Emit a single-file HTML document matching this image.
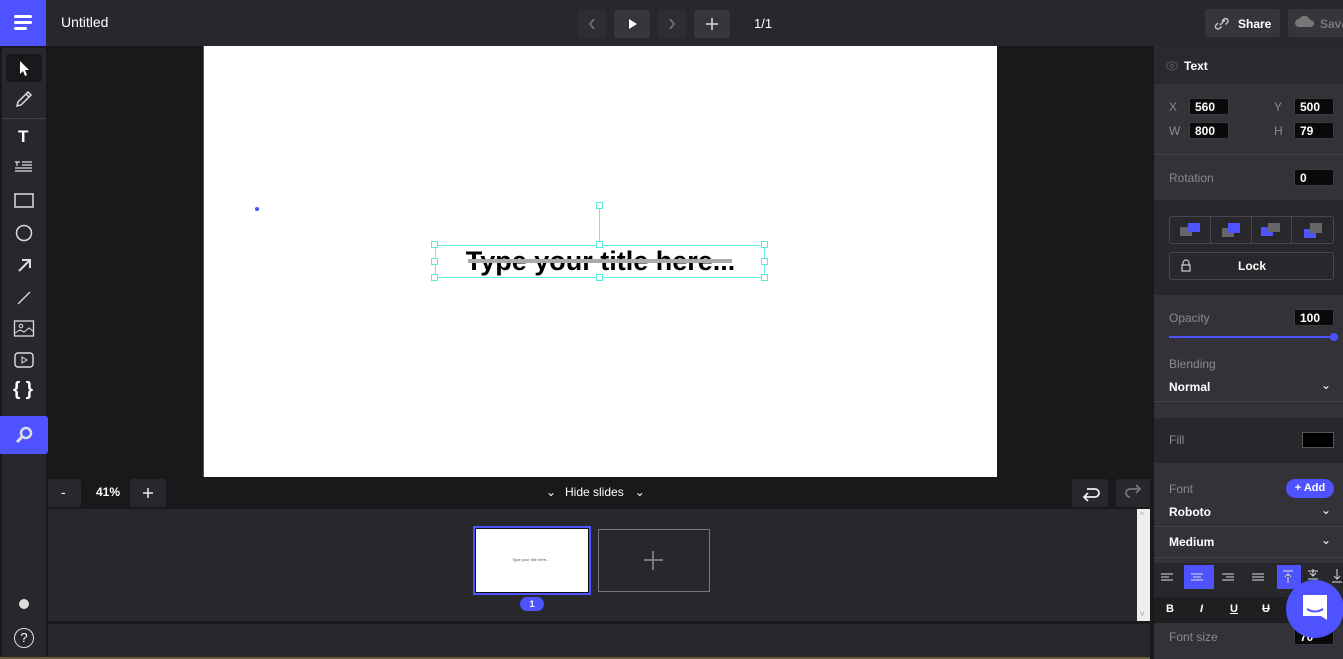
<!DOCTYPE html>
<html><head><meta charset="utf-8"><style>
*{box-sizing:border-box;margin:0;padding:0}
body{width:1343px;height:659px;overflow:hidden;background:#19191b;font-family:"Liberation Sans",sans-serif;color:#fff;position:relative}
.a{position:absolute}
.btn{position:absolute;background:#303035;border-radius:3px}
.t{position:absolute;font-size:12px;white-space:nowrap}
.g{color:#8a8a90}
.inp{position:absolute;background:#0a0a0b;border:1px solid #3a3a3f;border-radius:2px;font-size:12px;font-weight:bold;padding:1px 5px;height:17px;line-height:14px}
.h{position:absolute;width:7px;height:7px;border:1px solid #5ee8dc;background:#fff}
.ic{position:absolute;left:12px;width:24px;height:24px}
</style></head><body>
<!-- top bar -->
<div class="a" style="left:0;top:0;width:1343px;height:46px;background:#28272c"></div>
<div class="a" style="left:0;top:0;width:46px;height:46px;background:#4f52ff"></div>
<div class="a" style="left:14px;top:15px;width:18px;height:3px;background:#fff;border-radius:1.5px"></div>
<div class="a" style="left:14px;top:21px;width:18px;height:3px;background:#fff;border-radius:1.5px"></div>
<div class="a" style="left:14px;top:27px;width:13px;height:3px;background:#fff;border-radius:1.5px"></div>
<div class="t" style="left:61px;top:14px;font-size:14px">Untitled</div>
<div class="btn" style="left:578px;top:10px;width:28px;height:28px;background:#2f2e33"></div>
<svg class="a" style="left:578px;top:10px" width="28" height="28"><path d="M16 9l-4 5 4 5" stroke="#777" stroke-width="1.6" fill="none"/></svg>
<div class="btn" style="left:614px;top:10px;width:36px;height:28px;background:#37363c"></div>
<svg class="a" style="left:614px;top:10px" width="36" height="28"><path d="M15 9v10l8-5z" fill="#fff"/></svg>
<div class="btn" style="left:658px;top:10px;width:28px;height:28px;background:#2f2e33"></div>
<svg class="a" style="left:658px;top:10px" width="28" height="28"><path d="M12 9l4 5-4 5" stroke="#777" stroke-width="1.6" fill="none"/></svg>
<div class="btn" style="left:694px;top:10px;width:36px;height:28px;background:#37363c"></div>
<svg class="a" style="left:694px;top:10px" width="36" height="28"><path d="M18 8v12M12 14h12" stroke="#ddd" stroke-width="1.5"/></svg>
<div class="t" style="left:754px;top:16px;font-size:13px">1/1</div>
<div class="btn" style="left:1205px;top:9px;width:75px;height:28px;background:#36353b"></div>
<svg class="a" style="left:1212px;top:15px" width="20" height="16"><path d="M8 10l5-5M6 8l-2 2a2.5 2.5 0 003.5 3.5l2-2M10 6l2-2a2.5 2.5 0 013.5 3.5l-2 2" stroke="#ccc" stroke-width="1.3" fill="none"/></svg>
<div class="t" style="left:1238px;top:17px;font-weight:bold">Share</div>
<div class="btn" style="left:1288px;top:9px;width:60px;height:28px;background:#36353b"></div>
<svg class="a" style="left:1294px;top:14px" width="22" height="16"><path d="M5 13a4 4 0 010-8 6 6 0 0111 1 3.5 3.5 0 011 7z" fill="#777"/></svg>
<div class="t" style="left:1320px;top:17px;font-weight:bold;color:#777">Save</div>

<!-- left sidebar -->
<div class="a" style="left:2px;top:48px;width:44px;height:609px;background:#28272c"></div>
<div class="a" style="left:6px;top:54px;width:36px;height:28px;background:#19191b;border-radius:3px"></div>
<svg class="a" style="left:12px;top:56px" width="24" height="24"><path d="M8 5v13l3-3 2 5 2-1-2-5h4z" fill="#fff"/></svg>
<svg class="ic" style="top:87px"><path d="M5 19l1-4 10-10 3 3-10 10zM14 7l3 3" stroke="#ddd" stroke-width="1.5" fill="none"/></svg>
<div class="a" style="left:2px;top:118px;width:44px;height:1px;background:#444"></div>
<div class="t" style="left:18px;top:127px;font-size:17px;font-weight:bold">T</div>
<svg class="ic" style="top:156px"><path d="M3 6h5M5 6v4M10 6h10M10 9h10M3 12h17M3 15h17" stroke="#ddd" stroke-width="1.2"/></svg>
<svg class="ic" style="top:188px"><rect x="3" y="6" width="18" height="13" stroke="#ddd" stroke-width="1.5" fill="none"/></svg>
<svg class="ic" style="top:220px"><circle cx="12" cy="13" r="7.5" stroke="#ddd" stroke-width="1.5" fill="none"/></svg>
<svg class="ic" style="top:252px"><path d="M7 19L17 9M10 8h8v8" stroke="#ddd" stroke-width="2" fill="none"/></svg>
<svg class="ic" style="top:284px"><path d="M6 20L18 8" stroke="#ddd" stroke-width="1.3"/></svg>
<svg class="ic" style="top:316px"><rect x="2.5" y="5" width="19" height="15" stroke="#ddd" stroke-width="1.3" fill="none"/><circle cx="9" cy="10" r="1.8" stroke="#ddd" fill="none"/><path d="M3 17l5-3 4 2 5-4 4 3" stroke="#ddd" fill="none"/></svg>
<svg class="ic" style="top:348px"><rect x="3" y="5" width="18" height="14" rx="3" stroke="#ddd" stroke-width="1.4" fill="none"/><path d="M10 9v6l5-3z" stroke="#ddd" fill="none"/></svg>
<div class="t" style="left:13px;top:379px;font-size:19px;font-weight:bold">{ }</div>
<div class="a" style="left:0;top:416px;width:48px;height:38px;background:#4f52ff;border-radius:0 3px 3px 0"></div>
<svg class="a" style="left:12px;top:423px" width="24" height="24"><circle cx="14" cy="10" r="5" stroke="#ddd" stroke-width="2.5" fill="none"/><path d="M10 14l-5 5" stroke="#ddd" stroke-width="3"/></svg>
<div class="a" style="left:19px;top:599px;width:10px;height:10px;border-radius:50%;background:#ddd"></div>
<div class="a" style="left:14px;top:628px;width:20px;height:20px;border-radius:50%;border:1.3px solid #ddd;font-size:13px;text-align:center;line-height:18px">?</div>

<!-- canvas -->
<div class="a" style="left:203px;top:46px;width:794px;height:431px;background:#fff;border-left:1px solid #555"></div>
<div class="a" style="left:255px;top:207px;width:4px;height:4px;border-radius:50%;background:#4f52ff"></div>
<div class="t" style="left:434px;top:243px;width:333px;text-align:center;font-size:27px;color:#000;font-weight:bold;line-height:36px">Type your title here...</div>
<div class="a" style="left:468px;top:259px;width:264px;height:4px;background:#aaa"></div>
<div class="a" style="left:435px;top:245px;width:330px;height:33px;border:1.3px solid #6eeee2"></div>
<div class="a" style="left:599px;top:208px;width:1.3px;height:38px;background:#6eeee2"></div>
<div class="h" style="left:596px;top:202px"></div>
<div class="h" style="left:431px;top:241px"></div><div class="h" style="left:596px;top:241px"></div><div class="h" style="left:761px;top:241px"></div>
<div class="h" style="left:431px;top:258px"></div><div class="h" style="left:761px;top:258px"></div>
<div class="h" style="left:431px;top:274px"></div><div class="h" style="left:596px;top:274px"></div><div class="h" style="left:761px;top:274px"></div>

<!-- bottom toolbar -->
<div class="btn" style="left:48px;top:479px;width:33px;height:28px;background:#28272c"></div>
<div class="t" style="left:61px;top:484px;font-size:14px">-</div>
<div class="t" style="left:96px;top:485px;font-weight:bold">41%</div>
<div class="btn" style="left:130px;top:479px;width:36px;height:28px;background:#28272c"></div>
<svg class="a" style="left:130px;top:479px" width="36" height="28"><path d="M18 9v10M13 14h10" stroke="#eee" stroke-width="1.5"/></svg>
<div class="t" style="left:546px;top:485px;font-size:12px">⌄&nbsp;&nbsp; Hide slides &nbsp;&nbsp;⌄</div>
<div class="t" style="left:565px;top:485px;font-size:12px;background:#19191b;padding-right:4px">Hide slides</div>
<div class="btn" style="left:1072px;top:479px;width:36px;height:28px;background:#28272c"></div>
<svg class="a" style="left:1072px;top:479px" width="36" height="28"><path d="M12 18h11a4 4 0 000-8h-8M16 14l-4 4 4 4" stroke="#eee" stroke-width="1.8" fill="none"/></svg>
<div class="btn" style="left:1116px;top:479px;width:36px;height:28px;background:#28272c"></div>
<svg class="a" style="left:1116px;top:479px" width="36" height="28"><path d="M24 10H14a4 4 0 000 8M20 6l4 4-4 4" stroke="#777" stroke-width="1.8" fill="none"/></svg>

<!-- slides panel -->
<div class="a" style="left:48px;top:509px;width:1089px;height:112px;background:#28272c"></div>
<div class="a" style="left:1137px;top:509px;width:15px;height:112px;background:#eee"></div>
<div class="t" style="left:1140px;top:510px;font-size:9px;color:#aaa">^</div>
<div class="t" style="left:1140px;top:608px;font-size:9px;color:#aaa">v</div>
<div class="a" style="left:473px;top:526px;width:118px;height:69px;border:2px solid #4f52ff;background:#fff;outline:1px solid #111;outline-offset:-3px"></div>
<div class="t" style="left:512px;top:557px;font-size:4px;color:#555">Type your title here...</div>
<div class="a" style="left:520px;top:597px;width:24px;height:14px;border-radius:7px;background:#4f52ff;font-size:9px;font-weight:bold;text-align:center;line-height:14px">1</div>
<div class="a" style="left:598px;top:529px;width:112px;height:63px;border:1px solid #777"></div>
<svg class="a" style="left:598px;top:529px" width="112" height="63"><path d="M55 22v19M46 31h19" stroke="#777" stroke-width="2"/></svg>
<div class="a" style="left:48px;top:624px;width:1104px;height:33px;background:#28272c"></div>
<div class="a" style="left:0;top:657px;width:1343px;height:2px;background:#6b5a3a"></div>

<!-- right panel -->
<div class="a" style="left:1150px;top:46px;width:4px;height:613px;background:#19191b"></div>
<div class="a" style="left:1154px;top:46px;width:189px;height:38px;background:#2a292e"></div>
<svg class="a" style="left:1165px;top:59px" width="14" height="14"><ellipse cx="7" cy="7" rx="5.5" ry="4" stroke="#555" fill="none"/><circle cx="7" cy="7" r="1.6" stroke="#555" fill="none"/></svg>
<div class="t" style="left:1184px;top:59px;font-weight:bold">Text</div>
<div class="a" style="left:1154px;top:84px;width:189px;height:116px;background:#333238"></div>
<div class="a" style="left:1154px;top:154px;width:189px;height:1px;background:#444"></div>
<div class="t g" style="left:1169px;top:100px">X</div><div class="inp" style="left:1189px;top:98px;width:40px">560</div>
<div class="t g" style="left:1274px;top:100px">Y</div><div class="inp" style="left:1294px;top:98px;width:40px">500</div>
<div class="t g" style="left:1169px;top:124px">W</div><div class="inp" style="left:1189px;top:122px;width:40px">800</div>
<div class="t g" style="left:1274px;top:124px">H</div><div class="inp" style="left:1294px;top:122px;width:40px">79</div>
<div class="t g" style="left:1169px;top:171px">Rotation</div><div class="inp" style="left:1294px;top:169px;width:40px">0</div>
<div class="a" style="left:1154px;top:200px;width:189px;height:95px;background:#28272c"></div>
<div class="a" style="left:1169px;top:216px;width:165px;height:28px;border:1px solid #48474d;border-radius:3px"></div>
<div class="a" style="left:1210px;top:216px;width:1px;height:28px;background:#48474d"></div>
<div class="a" style="left:1251px;top:216px;width:1px;height:28px;background:#48474d"></div>
<div class="a" style="left:1291px;top:216px;width:1px;height:28px;background:#48474d"></div>
<div class="a" style="left:1180px;top:227px;width:12px;height:9px;background:#666"></div><div class="a" style="left:1188px;top:223px;width:12px;height:9px;background:#4f52ff"></div>
<div class="a" style="left:1222px;top:228px;width:12px;height:9px;background:#666"></div><div class="a" style="left:1228px;top:223px;width:12px;height:10px;background:#4f52ff"></div>
<div class="a" style="left:1261px;top:227px;width:12px;height:9px;background:#4f52ff"></div><div class="a" style="left:1268px;top:223px;width:12px;height:9px;background:#666"></div>
<div class="a" style="left:1304px;top:229px;width:12px;height:9px;background:#4f52ff"></div><div class="a" style="left:1310px;top:223px;width:12px;height:10px;background:#666"></div>
<div class="a" style="left:1169px;top:252px;width:165px;height:28px;border:1px solid #48474d;border-radius:3px"></div>
<svg class="a" style="left:1180px;top:259px" width="12" height="14"><path d="M3 6V4a3 3 0 016 0v2M2 6h8v6H2z" stroke="#ccc" stroke-width="1.2" fill="none"/></svg>
<div class="t" style="left:1238px;top:259px;font-weight:bold">Lock</div>
<div class="a" style="left:1154px;top:295px;width:189px;height:123px;background:#333238"></div>
<div class="t g" style="left:1169px;top:311px">Opacity</div><div class="inp" style="left:1294px;top:309px;width:40px">100</div>
<div class="a" style="left:1169px;top:336px;width:164px;height:2px;background:#4f52ff"></div>
<div class="a" style="left:1330px;top:333px;width:8px;height:8px;border-radius:50%;background:#4f52ff"></div>
<div class="t g" style="left:1169px;top:357px">Blending</div>
<div class="t" style="left:1169px;top:380px;font-weight:bold">Normal</div>
<div class="t" style="left:1321px;top:378px">⌄</div>
<div class="a" style="left:1154px;top:401px;width:189px;height:1px;background:#444"></div>
<div class="a" style="left:1154px;top:418px;width:189px;height:45px;background:#28272c"></div>
<div class="t g" style="left:1169px;top:433px">Fill</div>
<div class="a" style="left:1302px;top:432px;width:32px;height:16px;background:#000;border:1px solid #555"></div>
<div class="a" style="left:1154px;top:463px;width:189px;height:100px;background:#333238"></div>
<div class="t g" style="left:1169px;top:482px">Font</div>
<div class="a" style="left:1286px;top:479px;width:48px;height:19px;border-radius:10px;background:#4f52ff;font-size:11px;font-weight:bold;line-height:19px;text-align:center">+ Add</div>
<div class="t" style="left:1169px;top:505px;font-weight:bold">Roboto</div><div class="t" style="left:1321px;top:503px">⌄</div>
<div class="a" style="left:1154px;top:526px;width:189px;height:1px;background:#444"></div>
<div class="t" style="left:1169px;top:535px;font-weight:bold">Medium</div><div class="t" style="left:1321px;top:533px">⌄</div>
<div class="a" style="left:1154px;top:557px;width:189px;height:1px;background:#444"></div>
<div class="a" style="left:1154px;top:563px;width:189px;height:34px;background:#28272c"></div>
<div class="a" style="left:1184px;top:565px;width:30px;height:24px;background:#4f52ff"></div>
<div class="a" style="left:1277px;top:565px;width:24px;height:24px;background:#4f52ff"></div>
<svg class="a" style="left:1154px;top:565px" width="189" height="24"><g stroke="#ddd" stroke-width="1"><path d="M7 9h12M7 12h8M7 15h12"/><path d="M37 9h12M39 12h8M37 15h12"/><path d="M68 9h12M72 12h8M68 15h12"/><path d="M98 9h12M98 12h12M98 15h12"/><path d="M129 6h10M134 18V9M131 12l3-3 3 3"/><path d="M154 6h10M159 4v7M156 8l3 3 3-3M154 14h10"/><path d="M183 4v10M180 11l3 3 3-3M178 17h10"/></g></svg>
<div class="a" style="left:1154px;top:597px;width:189px;height:26px;background:#1f1f22"></div>
<div class="t" style="left:1166px;top:603px;font-weight:bold;font-size:11px">B</div>
<div class="t" style="left:1200px;top:603px;font-weight:bold;font-style:italic;font-size:11px">I</div>
<div class="t" style="left:1230px;top:603px;font-weight:bold;text-decoration:underline;font-size:11px">U</div>
<div class="t" style="left:1262px;top:603px;font-weight:bold;text-decoration:line-through;font-size:11px">U</div>
<div class="a" style="left:1154px;top:623px;width:189px;height:36px;background:#333238"></div>
<div class="t g" style="left:1169px;top:630px">Font size</div><div class="inp" style="left:1294px;top:628px;width:40px">70</div>
<div class="a" style="left:1286px;top:580px;width:58px;height:58px;border-radius:50%;background:#4f52ff"></div>
<svg class="a" style="left:1300px;top:592px" width="30" height="32"><path d="M3 3h24v25l-6-4H3z" fill="#fff"/><path d="M7 17q8 5 16 0" stroke="#4f52ff" stroke-width="2" fill="none"/></svg>
</body></html>
